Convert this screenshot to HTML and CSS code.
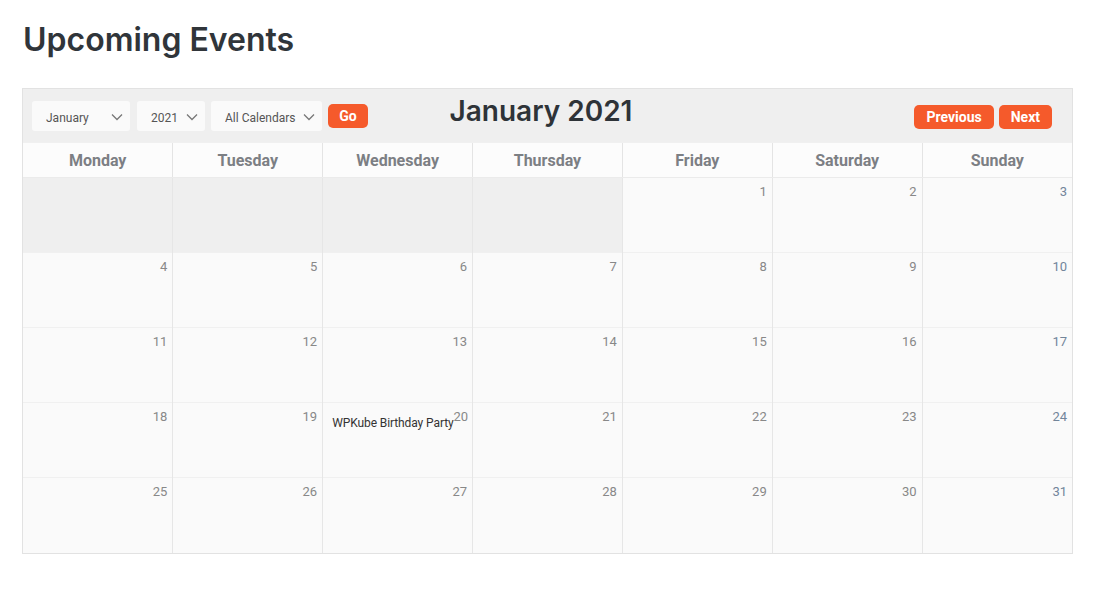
FILE: index.html
```html
<!DOCTYPE html>
<html lang="en">

<head>
    <meta charset="UTF-8">
    <meta name="viewport" content="width=device-width, initial-scale=1.0">
    <title>Upcoming Events</title>
    <link rel="stylesheet" href="styles.css">
</head>

<body>
    <div class="page">
        <h1 class="page-title">Upcoming Events</h1>

        <div class="calendar">
            <div class="calendar-bar">
                <div class="filters">
                    <div class="select select-month">
                        <select>
                            <option>January</option>
                        </select>
                        <svg class="chevron" width="12" height="8" viewBox="0 0 12 8"><path d="M1 1.5l5 5 5-5" fill="none" stroke="#777" stroke-width="1.3"/></svg>
                    </div>
                    <div class="select select-year">
                        <select>
                            <option>2021</option>
                        </select>
                        <svg class="chevron" width="12" height="8" viewBox="0 0 12 8"><path d="M1 1.5l5 5 5-5" fill="none" stroke="#777" stroke-width="1.3"/></svg>
                    </div>
                    <div class="select select-cal">
                        <select>
                            <option>All Calendars</option>
                        </select>
                        <svg class="chevron" width="12" height="8" viewBox="0 0 12 8"><path d="M1 1.5l5 5 5-5" fill="none" stroke="#777" stroke-width="1.3"/></svg>
                    </div>
                    <button class="btn btn-go">Go</button>
                </div>
                <h2 class="month-title">January 2021</h2>
                <div class="nav">
                    <button class="btn">Previous</button>
                    <button class="btn">Next</button>
                </div>
            </div>

            <table class="month">
                <thead>
                    <tr>
                        <th>Monday</th>
                        <th>Tuesday</th>
                        <th>Wednesday</th>
                        <th>Thursday</th>
                        <th>Friday</th>
                        <th>Saturday</th>
                        <th>Sunday</th>
                    </tr>
                </thead>
                <tbody>
                    <tr>
                        <td class="empty"></td>
                        <td class="empty"></td>
                        <td class="empty"></td>
                        <td class="empty"></td>
                        <td><span class="day">1</span></td>
                        <td><span class="day">2</span></td>
                        <td class="sun"><span class="day">3</span></td>
                    </tr>
                    <tr>
                        <td><span class="day">4</span></td>
                        <td><span class="day">5</span></td>
                        <td><span class="day">6</span></td>
                        <td><span class="day">7</span></td>
                        <td><span class="day">8</span></td>
                        <td><span class="day">9</span></td>
                        <td class="sun"><span class="day">10</span></td>
                    </tr>
                    <tr>
                        <td><span class="day">11</span></td>
                        <td><span class="day">12</span></td>
                        <td><span class="day">13</span></td>
                        <td><span class="day">14</span></td>
                        <td><span class="day">15</span></td>
                        <td><span class="day">16</span></td>
                        <td class="sun"><span class="day">17</span></td>
                    </tr>
                    <tr>
                        <td><span class="day">18</span></td>
                        <td><span class="day">19</span></td>
                        <td>
                            <div class="cell-top">
                                <a class="event" href="#">WPKube Birthday Party</a>
                                <span class="day">20</span>
                            </div>
                        </td>
                        <td><span class="day">21</span></td>
                        <td><span class="day">22</span></td>
                        <td><span class="day">23</span></td>
                        <td class="sun"><span class="day">24</span></td>
                    </tr>
                    <tr>
                        <td><span class="day">25</span></td>
                        <td><span class="day">26</span></td>
                        <td><span class="day">27</span></td>
                        <td><span class="day">28</span></td>
                        <td><span class="day">29</span></td>
                        <td><span class="day">30</span></td>
                        <td class="sun"><span class="day">31</span></td>
                    </tr>
                </tbody>
            </table>
        </div>
    </div>
</body>

</html>
```

FILE: styles.css
```css
* {
    margin: 0;
    padding: 0;
    box-sizing: border-box;
}

body {
    font-family: Roboto, "Liberation Sans", Arial, sans-serif;
    background-color: #ffffff;
    color: #333;
}

.page {
    padding: 20px 27px 0 22px;
}

.page-title {
    font-family: Inter, Roboto, sans-serif;
    font-size: 32px;
    font-weight: 600;
    line-height: 39px;
    color: #30353a;
    margin: 0 0 29px 1px;
}

.calendar {
    border: 1px solid #e2e2e2;
}

.calendar-bar {
    display: grid;
    grid-template-columns: 1fr auto 1fr;
    align-items: start;
    height: 53px;
    padding: 12px 20px 0 9px;
    background-color: #efefef;
}

.filters {
    display: flex;
    align-items: center;
    gap: 6px;
}

.select {
    position: relative;
    height: 30px;
    background-color: #fafafa;
    border-radius: 3px;
}

.select select {
    appearance: none;
    -webkit-appearance: none;
    width: 100%;
    height: 100%;
    border: none;
    background: transparent;
    font-family: Roboto, sans-serif;
    font-size: 12px;
    color: #555;
    padding: 3px 0 0 14px;
    outline: none;
}

.select .chevron {
    position: absolute;
    right: 7px;
    top: 12px;
    pointer-events: none;
}

.select-month { width: 98px; }
.select-year { width: 68px; margin-left: 1px; }
.select-cal { width: 111px; }

.btn {
    height: 24px;
    padding: 0 12px;
    border: none;
    border-radius: 5px;
    background-color: #f55a2b;
    color: #fff;
    font-family: Roboto, sans-serif;
    font-size: 14px;
    font-weight: 700;
    cursor: pointer;
}

.btn-go {
    width: 40px;
    padding: 0;
}

.month-title {
    font-family: Inter, Roboto, sans-serif;
    font-size: 28px;
    font-weight: 600;
    line-height: 24px;
    color: #2e3338;
    margin: -2px 2px 0 0;
}

.nav {
    display: flex;
    justify-content: flex-end;
    gap: 5px;
    padding-top: 4px;
}

.month {
    width: 100%;
    border-collapse: collapse;
    table-layout: fixed;
}

.month th {
    height: 35px;
    font-size: 16px;
    font-weight: 700;
    color: #7c7f84;
    background-color: #fcfcfc;
    border-left: 1px solid #e4e4e4;
    border-top: 1px solid #f0f0f0;
    border-bottom: 1px solid #ebebeb;
    text-align: center;
}

.month td {
    height: 75px;
    vertical-align: top;
    text-align: right;
    font-size: 13px;
    line-height: 15px;
    padding: 6px 5px 0 9px;
    background-color: #fafafa;
    border-left: 1px solid #e6e6e6;
    border-top: 1px solid #f0f0f0;
}

.month th:first-child,
.month td:first-child {
    border-left: none;
}

.month td.empty {
    background-color: #efefef;
}

.day {
    font-size: 13px;
    color: #888;
}

.sun .day {
    color: #72859a;
}

.cell-top {
    display: flex;
    justify-content: space-between;
    align-items: flex-start;
}

.event {
    margin-top: 7px;
    font-size: 12px;
    letter-spacing: -0.1px;
    color: #333;
    white-space: nowrap;
    text-decoration: none;
    text-align: left;
}
```
